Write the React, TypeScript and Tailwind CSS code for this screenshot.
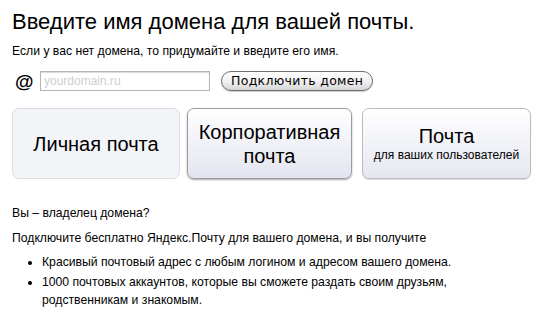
const FONT = "font-['Liberation_Sans',Arial,sans-serif]";

function Card({
  children,
  variant,
  className = "",
}: {
  children: React.ReactNode;
  variant: "flat" | "pressed" | "raised";
  className?: string;
}) {
  const look = {
    flat: "border-[#dcdde2] bg-[#f3f4f8]",
    pressed:
      "border-[#9a9ca4] bg-gradient-to-b from-white to-[#e3e5ef] shadow-[0_1px_2px_rgba(0,0,0,0.35)]",
    raised:
      "border-[#b9bbc2] bg-gradient-to-b from-white to-[#e5e7f0] shadow-[0_1px_1px_rgba(0,0,0,0.15)]",
  }[variant];
  return (
    <div
      className={`flex h-[71px] flex-col items-center justify-center rounded-[7px] border text-center text-black ${look} ${className}`}
    >
      {children}
    </div>
  );
}

export default function App() {
  return (
    <div className={`${FONT} h-[316px] w-[543px] bg-white px-3 pt-[9px] text-black`}>
      <h1 className="text-[22px] leading-[26px]">Введите имя домена для вашей почты.</h1>
      <p className="mt-[8px] text-[12.2px] leading-[16px]">
        Если у вас нет домена, то придумайте и введите его имя.
      </p>

      <div className="mt-[12px] flex items-center">
        <span className="ml-[3px] w-[25px] text-[19px] font-bold leading-none">@</span>
        <input
          className="h-[20px] w-[170px] border border-[#b5b5b5] px-[3px] text-[12px] text-[#999] outline-none shadow-[inset_0_1px_1px_rgba(0,0,0,0.15)]"
          placeholder="yourdomain.ru"
        />
        <button
          type="button"
          className="ml-[11px] h-[20px] rounded-full border border-[#6f6f6f] bg-gradient-to-b from-white via-[#f2f2f2] to-[#d6d6d6] px-[9px] text-[12.5px] leading-none tracking-[0.3px] shadow-[0_1px_1px_rgba(0,0,0,0.2)] font-['DejaVu_Sans',sans-serif]"
        >
          Подключить домен
        </button>
      </div>

      <div className="mt-[17px] flex">
        <Card variant="flat" className="w-[169px]">
          <span className="text-[20px]">Личная почта</span>
        </Card>
        <Card variant="pressed" className="ml-[7px] w-[166px]">
          <span className="text-[20px] leading-[24px]">
            Корпоративная
            <br />
            почта
          </span>
        </Card>
        <Card variant="raised" className="ml-[10px] w-[170px]">
          <span className="text-[20px] leading-[23px]">Почта</span>
          <span className="text-[12px] leading-[14px]">для ваших пользователей</span>
        </Card>
      </div>

      <p className="mt-[26px] text-[12.2px] leading-[16px]">Вы – владелец домена?</p>
      <p className="mt-[9px] text-[12.2px] leading-[16px]">
        Подключите бесплатно Яндекс.Почту для вашего домена, и вы получите
      </p>
      <ul className="mt-[7px] list-disc pl-[30px] text-[12.2px] leading-[18px]">
        <li className="mb-[2px]">Красивый почтовый адрес с любым логином и адресом вашего домена.</li>
        <li>
          1000 почтовых аккаунтов, которые вы сможете раздать своим друзьям,
          <br />
          родственникам и знакомым.
        </li>
      </ul>
    </div>
  );
}
